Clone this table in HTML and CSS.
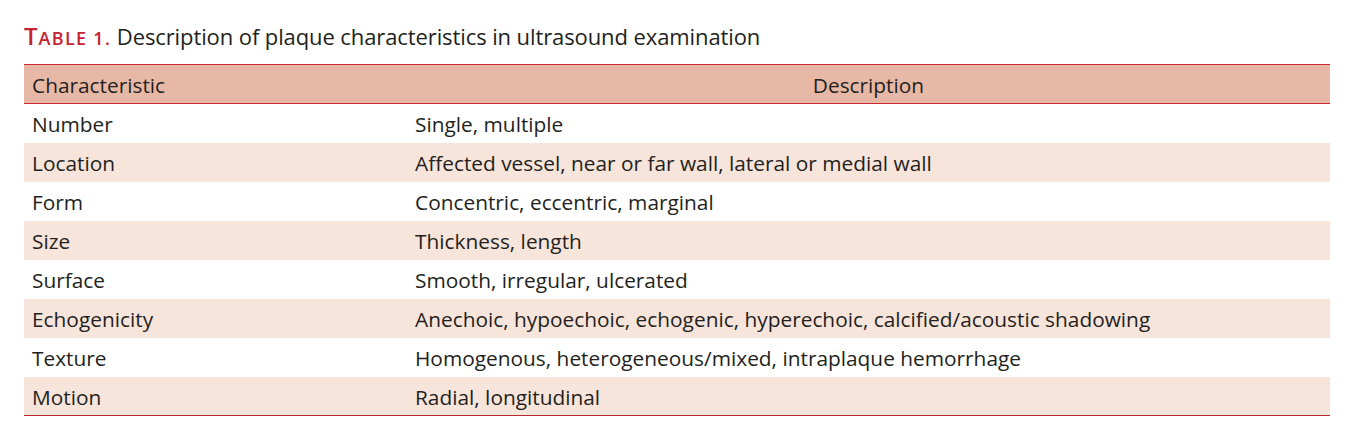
FILE: index.html
```html
<!DOCTYPE html>
<html>
<head>
<meta charset="utf-8">
<link rel="stylesheet" href="styles.css">
</head>
<body>
<div class="wrap">
  <div class="caption"><span class="label">T<span class="sc">able 1.</span></span> Description of plaque characteristics in ultrasound examination</div>
  <table class="tbl">
    <thead>
      <tr><th class="c1">Characteristic</th><th class="c2">Description</th></tr>
    </thead>
    <tbody>
      <tr><td>Number</td><td>Single, multiple</td></tr>
      <tr class="alt"><td>Location</td><td>Affected vessel, near or far wall, lateral or medial wall</td></tr>
      <tr><td>Form</td><td>Concentric, eccentric, marginal</td></tr>
      <tr class="alt"><td>Size</td><td>Thickness, length</td></tr>
      <tr><td>Surface</td><td>Smooth, irregular, ulcerated</td></tr>
      <tr class="alt"><td>Echogenicity</td><td>Anechoic, hypoechoic, echogenic, hyperechoic, calcified/acoustic shadowing</td></tr>
      <tr><td>Texture</td><td>Homogenous, heterogeneous/mixed, intraplaque hemorrhage</td></tr>
      <tr class="alt"><td>Motion</td><td>Radial, longitudinal</td></tr>
    </tbody>
  </table>
</div>
</body>
</html>
```
FILE: styles.css
```css
html, body { margin: 0; padding: 0; background: #fff; }
body { font-family: "Open Sans", "DejaVu Sans", sans-serif; color: #231f20; }
.wrap { padding: 20px 24px 0 24px; width: 1306px; }
.caption { font-size: 22px; line-height: 32px; height: 44px; letter-spacing: -0.1px; }
.label { color: #c4232f; font-weight: 600; font-size: 24px; letter-spacing: 1px; }
.label .sc { text-transform: uppercase; font-size: 18px; letter-spacing: 1.3px; }
.tbl { width: 1306px; border-collapse: collapse; font-size: 20.85px; }
.tbl th, .tbl td { height: 39px; padding: 2px 0 0 8px; font-weight: 400; text-align: left; box-sizing: border-box; }
.tbl thead tr { background: #e8b8a6; border-top: 1px solid #cc2a33; border-bottom: 1px solid #cc2a33; }
.tbl th.c1 { width: 383px; }
.tbl th.c2 { text-align: center; padding: 2px 0 0 0; }
.tbl td:first-child { width: 383px; }
.tbl tr.alt { background: #f7e4db; }
.tbl tbody tr:last-child { border-bottom: 1px solid #b8292f; }
```
